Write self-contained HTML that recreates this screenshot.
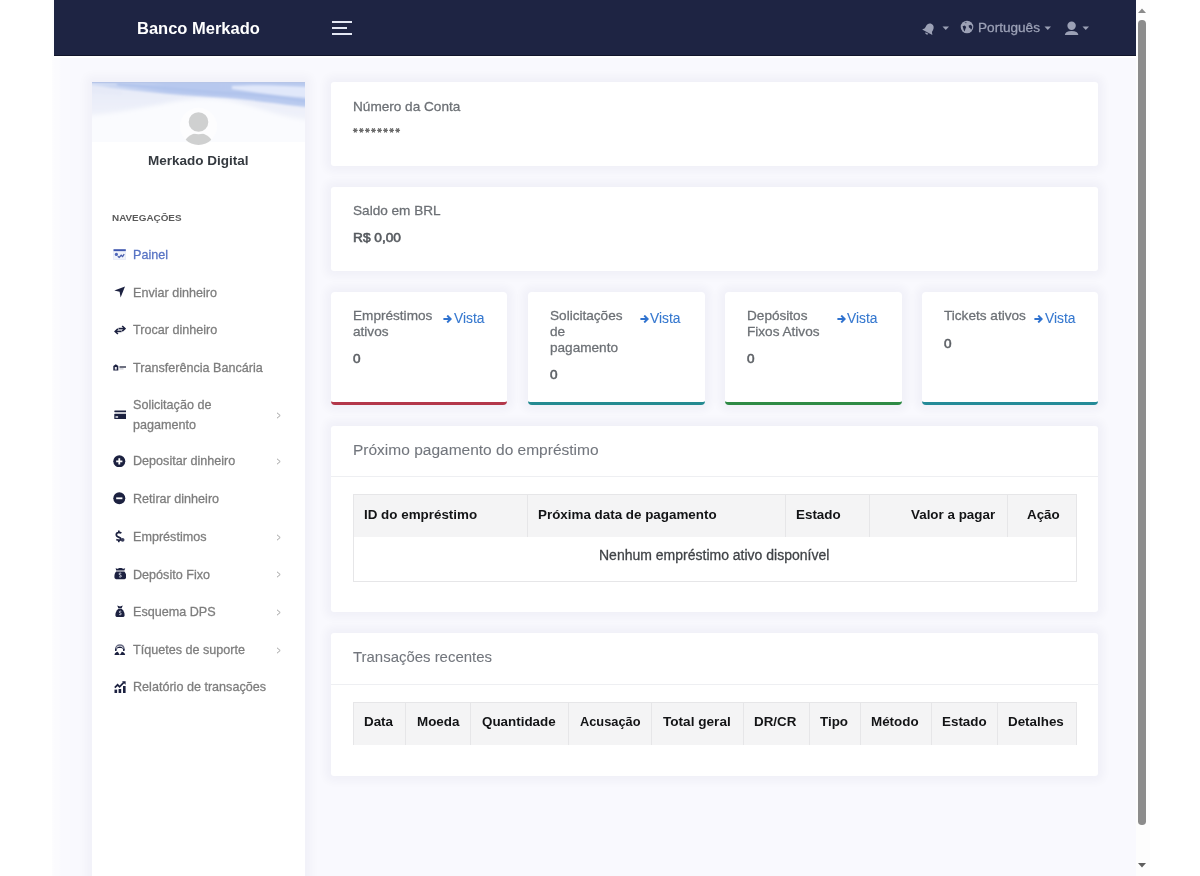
<!DOCTYPE html>
<html><head><meta charset="utf-8"><title>Banco Merkado</title>
<style>
html,body{margin:0;padding:0;background:#fff;width:1200px;height:876px;overflow:hidden;font-family:"Liberation Sans", sans-serif}
.t{position:absolute;white-space:nowrap;line-height:1;will-change:transform}
</style></head><body>
<div style="position:absolute;left:52px;top:0px;width:1086px;height:876px;background:linear-gradient(90deg,#fdfdfe 0,#fbfbfe 3px,#fbfbfe 7px,#f9f9fe 9px)"></div>
<div style="position:absolute;left:54px;top:56px;width:1082px;height:1.5px;background:#ffffff"></div>
<div style="position:absolute;left:54px;top:0px;width:1082px;height:56px;background:#1e2443;border-bottom:1px solid #11152b;box-sizing:border-box"></div>
<div class="t" style="left:137.00px;top:19.63px;font-size:16.5px;font-weight:700;color:#ffffff;">Banco Merkado</div>
<div style="position:absolute;left:332px;top:21.3px;width:20px;height:1.8px;background:#e4e7f3"></div>
<div style="position:absolute;left:332px;top:27.2px;width:15px;height:1.8px;background:#e4e7f3"></div>
<div style="position:absolute;left:332px;top:33.3px;width:20px;height:1.8px;background:#e4e7f3"></div>
<svg style="position:absolute;left:921px;top:22px;" width="16" height="14" viewBox="0 0 16 14"><g transform="rotate(28 8 7)" fill="#9ca1b6"><path d="M8 1.4c2.5 0 4 2 4 4.5v2.4l1.8 2.4H2.2L4 8.3V5.9C4 3.4 5.5 1.4 8 1.4z"/><path d="M6.4 11.4h3.2a1.6 1.6 0 0 1-3.2 0z"/></g></svg>
<svg style="position:absolute;left:942px;top:26px;" width="8" height="5" viewBox="0 0 8 5"><path d="M0.5 0.5h6.5l-3.25 3.6z" fill="#9ca1b6"/></svg>
<svg style="position:absolute;left:960px;top:20px;" width="14" height="14" viewBox="0 0 14 14"><circle cx="7" cy="7" r="6.3" fill="#9ca1b6"/><path d="M2.6 6.2l2.2-.8 1.4 1.6-.9 2.2-.6 2.4-1-1.6z" fill="#1e2443"/><path d="M8.6 5.4l2.2-.6 1.4 1.4-.2 2.2-1 1.4-.8-1.6-1.2-.8z" fill="#1e2443"/><path d="M4.3 1.8l2.6.4-1 1.2z" fill="#1e2443" opacity=".6"/></svg>
<div class="t" style="left:977.50px;top:20.69px;font-size:13.6px;font-weight:400;color:#9ca1b6;-webkit-text-stroke:0.28px #9ca1b6;">Português</div>
<svg style="position:absolute;left:1044px;top:25.5px;" width="8" height="5" viewBox="0 0 8 5"><path d="M0.5 0.5h6.5l-3.25 3.6z" fill="#9ca1b6"/></svg>
<svg style="position:absolute;left:1064px;top:20.5px;" width="16" height="15" viewBox="0 0 16 15"><circle cx="7.6" cy="4.8" r="4.2" fill="#9ca1b6"/><path d="M0.8 14c.4-2.6 2.6-4 6.8-4s6.4 1.4 6.8 4z" fill="#9ca1b6"/></svg>
<svg style="position:absolute;left:1082px;top:26px;" width="8" height="5" viewBox="0 0 8 5"><path d="M0.5 0.5h6.5l-3.25 3.6z" fill="#9ca1b6"/></svg>
<div style="position:absolute;left:1136px;top:0px;width:14px;height:876px;background:#fdfdfd"></div>
<div style="position:absolute;left:1138px;top:20px;width:7.6px;height:805px;background:#8c8c8c;border-radius:3.8px"></div>
<svg style="position:absolute;left:1137px;top:8px;" width="10" height="6" viewBox="0 0 10 6"><path d="M1 5h8l-4-4.5z" fill="#8a8a8a"/></svg>
<svg style="position:absolute;left:1137px;top:862px;" width="10" height="6" viewBox="0 0 10 6"><path d="M1 1h8l-4 4.5z" fill="#5f5f5f"/></svg>
<div style="position:absolute;left:92px;top:82px;width:213px;height:800px;background:#fff;box-shadow:0 0 9px 6px rgba(40,40,90,0.035)"></div>
<svg style="position:absolute;left:92px;top:82px;" width="213" height="60" viewBox="0 0 213 60"><defs>
<filter id="bl" x="-10%" y="-30%" width="120%" height="160%"><feGaussianBlur stdDeviation="1.2"/></filter>
<filter id="bl2" x="-10%" y="-30%" width="120%" height="160%"><feGaussianBlur stdDeviation="2"/></filter>
<linearGradient id="rib" x1="0" y1="0" x2="1" y2="0"><stop offset="0" stop-color="#d6e0f5"/><stop offset=".35" stop-color="#b7c8ee"/><stop offset="1" stop-color="#b9caef"/></linearGradient>
<linearGradient id="lav" x1="0" y1="0" x2="0" y2="1"><stop offset="0" stop-color="#e3e8f7"/><stop offset="1" stop-color="#f1f3fa"/></linearGradient>
</defs>
<rect width="213" height="60" fill="#fafbfe"/>
<g filter="url(#bl2)"><path d="M-10 -5H223V39C190 37 165 24 140 19 120 15 100 16 80 20 50 26 20 32 -10 34z" fill="url(#lav)"/></g>
<g filter="url(#bl)">
<path d="M-5 -5H218V25C190 23 160 17 120 15 80 13 40 8 -5 4z" fill="url(#rib)"/>
<path d="M-5 3C10 4 20 6 30 9V13C20 12 10 11 -5 11z" fill="#e6eaf7"/>
<path d="M140 4C170 2 195 4 218 5V16C190 14 165 11 140 7z" fill="#e1e8fa"/>
<path d="M25 2C70 6 110 10 150 12 180 14 200 17 218 20" fill="none" stroke="#afc2eb" stroke-width="2.5"/>
</g>
<path d="M0 0H213V1.2H0z" fill="#b6c5e8"/>
</svg>
<svg style="position:absolute;left:178px;top:106px;" width="41" height="41" viewBox="0 0 41 41"><defs><clipPath id="avc"><circle cx="20.5" cy="20.4" r="18.6"/></clipPath>
<mask id="avm"><rect width="41" height="41" fill="#fff"/><circle cx="20.5" cy="16" r="12.2" fill="#000"/></mask></defs>
<circle cx="20.5" cy="20.4" r="18.6" fill="#fdfdfe"/>
<circle cx="20.5" cy="16" r="9.8" fill="#cfd0d0"/>
<g clip-path="url(#avc)"><ellipse cx="20.5" cy="40" rx="14.5" ry="13" fill="#cfd0d0" mask="url(#avm)"/></g></svg>
<div class="t" style="left:147.50px;top:153.57px;font-size:13.5px;font-weight:700;color:#353a40;">Merkado Digital</div>
<div class="t" style="left:112.30px;top:213.42px;font-size:9.9px;font-weight:700;color:#5a5a5a;">NAVEGAÇÕES</div>
<div class="t" style="left:132.80px;top:249.33px;font-size:12.6px;font-weight:400;color:#5874c4;-webkit-text-stroke:0.28px #5874c4;">Painel</div>
<div class="t" style="left:132.80px;top:286.73px;font-size:12.6px;font-weight:400;color:#7d7d7d;-webkit-text-stroke:0.28px #7d7d7d;">Enviar dinheiro</div>
<div class="t" style="left:132.80px;top:324.33px;font-size:12.6px;font-weight:400;color:#7d7d7d;-webkit-text-stroke:0.28px #7d7d7d;">Trocar dinheiro</div>
<div class="t" style="left:132.80px;top:361.83px;font-size:12.6px;font-weight:400;color:#7d7d7d;-webkit-text-stroke:0.28px #7d7d7d;">Transferência Bancária</div>
<div class="t" style="left:132.8px;top:396.18px;font-size:12.6px;line-height:19.5px;color:#7d7d7d;-webkit-text-stroke:0.28px #7d7d7d">Solicitação de<br>pagamento</div>
<div class="t" style="left:132.80px;top:455.23px;font-size:12.6px;font-weight:400;color:#7d7d7d;-webkit-text-stroke:0.28px #7d7d7d;">Depositar dinheiro</div>
<div class="t" style="left:132.80px;top:493.33px;font-size:12.6px;font-weight:400;color:#7d7d7d;-webkit-text-stroke:0.28px #7d7d7d;">Retirar dinheiro</div>
<div class="t" style="left:132.80px;top:530.63px;font-size:12.6px;font-weight:400;color:#7d7d7d;-webkit-text-stroke:0.28px #7d7d7d;">Empréstimos</div>
<div class="t" style="left:132.80px;top:568.63px;font-size:12.6px;font-weight:400;color:#7d7d7d;-webkit-text-stroke:0.28px #7d7d7d;">Depósito Fixo</div>
<div class="t" style="left:132.80px;top:606.33px;font-size:12.6px;font-weight:400;color:#7d7d7d;-webkit-text-stroke:0.28px #7d7d7d;">Esquema DPS</div>
<div class="t" style="left:132.80px;top:643.93px;font-size:12.6px;font-weight:400;color:#7d7d7d;-webkit-text-stroke:0.28px #7d7d7d;">Tíquetes de suporte</div>
<div class="t" style="left:132.80px;top:681.33px;font-size:12.6px;font-weight:400;color:#7d7d7d;-webkit-text-stroke:0.28px #7d7d7d;">Relatório de transações</div>
<svg style="position:absolute;left:276px;top:412px;" width="6" height="7" viewBox="0 0 6 7"><path d="M1 0.8L4.2 3.5 1 6.2" fill="none" stroke="#a5a5a5" stroke-width="1"/></svg>
<svg style="position:absolute;left:276px;top:458px;" width="6" height="7" viewBox="0 0 6 7"><path d="M1 0.8L4.2 3.5 1 6.2" fill="none" stroke="#a5a5a5" stroke-width="1"/></svg>
<svg style="position:absolute;left:276px;top:533.5px;" width="6" height="7" viewBox="0 0 6 7"><path d="M1 0.8L4.2 3.5 1 6.2" fill="none" stroke="#a5a5a5" stroke-width="1"/></svg>
<svg style="position:absolute;left:276px;top:571px;" width="6" height="7" viewBox="0 0 6 7"><path d="M1 0.8L4.2 3.5 1 6.2" fill="none" stroke="#a5a5a5" stroke-width="1"/></svg>
<svg style="position:absolute;left:276px;top:608.5px;" width="6" height="7" viewBox="0 0 6 7"><path d="M1 0.8L4.2 3.5 1 6.2" fill="none" stroke="#a5a5a5" stroke-width="1"/></svg>
<svg style="position:absolute;left:276px;top:646.5px;" width="6" height="7" viewBox="0 0 6 7"><path d="M1 0.8L4.2 3.5 1 6.2" fill="none" stroke="#a5a5a5" stroke-width="1"/></svg>
<svg style="position:absolute;left:113px;top:249px;" width="13" height="11" viewBox="0 0 13 11"><rect x=".5" y=".2" width="12.3" height="2.3" fill="#4159b0"/><rect x=".5" y="2.5" width="12.3" height="8" fill="#f0f3fb"/><rect x=".5" y="2.5" width="12.3" height="8" fill="none" stroke="#dfe5f5" stroke-width=".6"/><circle cx="3.4" cy="5.4" r="1.6" fill="#4e66b8"/><path d="M4.8 7.2L6.2 8.4 8.2 6.2 9.6 7.6 11.2 5.2" fill="none" stroke="#4a5fae" stroke-width="1.3"/></svg>
<svg style="position:absolute;left:114px;top:286px;" width="12" height="12" viewBox="0 0 12 12"><path d="M0.3 4.6L11 0.6 6.6 11.4 5.6 5.8z" fill="#1c2140"/></svg>
<svg style="position:absolute;left:113.5px;top:324.5px;" width="12.5" height="10" viewBox="0 0 12.5 10"><path d="M4.5 3.6H10" stroke="#1c2140" stroke-width="1.6"/><path d="M8.2 1L11 3.6 8.2 6.2" fill="none" stroke="#1c2140" stroke-width="1.6"/><path d="M2 6.4H7.6" stroke="#1c2140" stroke-width="1.6"/><path d="M3.9 3.8L1.2 6.4 3.9 9" fill="none" stroke="#1c2140" stroke-width="1.6"/></svg>
<svg style="position:absolute;left:113px;top:364px;" width="14" height="7" viewBox="0 0 14 7"><path d="M0.3 2L2.8 0.2 5.3 2V6.5H0.3z" fill="#1c2140"/><rect x="1.8" y="3" width="2" height="2.6" fill="#e8e8ee"/><rect x="6.5" y="2.2" width="6.5" height="1.6" fill="#4b4f63"/><rect x="6.5" y="4.4" width="4" height="1" fill="#b9bbc6"/></svg>
<svg style="position:absolute;left:113.5px;top:409.5px;" width="12.5" height="9.5" viewBox="0 0 12.5 9.5"><rect x=".3" y=".4" width="12" height="1.8" rx=".6" fill="#1c2140"/><rect x=".3" y="3.8" width="12" height="5.2" rx=".6" fill="#1c2140"/><rect x="1.5" y="6.3" width="2.6" height="1.4" fill="#fff"/></svg>
<svg style="position:absolute;left:113.3px;top:454.8px;" width="12.6" height="12.6" viewBox="0 0 12.6 12.6"><circle cx="6.3" cy="6.3" r="6" fill="#1c2140"/><path d="M6.3 3.2v6.2M3.2 6.3h6.2" stroke="#fff" stroke-width="1.8"/></svg>
<svg style="position:absolute;left:113.3px;top:492.4px;" width="12.6" height="12.6" viewBox="0 0 12.6 12.6"><circle cx="6.3" cy="6.3" r="6" fill="#1c2140"/><path d="M3.2 6.3h6.2" stroke="#fff" stroke-width="1.8"/></svg>
<svg style="position:absolute;left:114.5px;top:530px;" width="10" height="13" viewBox="0 0 10 13"><path d="M3.8 0.5V2.3C2 2.6 1.3 3.6 1.3 4.7c0 1.6 1.4 2.2 2.8 2.7 1.3.5 1.8.9 1.8 1.6 0 .8-.7 1.2-1.9 1.2-.9 0-1.9-.3-2.7-.7" fill="none" stroke="#1c2140" stroke-width="1.7"/><path d="M3.8 10.2V12.2" stroke="#1c2140" stroke-width="1.7"/><path d="M3.8 2.3c1 0 1.9.2 2.6.6" fill="none" stroke="#1c2140" stroke-width="1.7"/><circle cx="7.6" cy="9.8" r="1.9" fill="#3b3f5c"/></svg>
<svg style="position:absolute;left:113.5px;top:567px;" width="12.5" height="12.5" viewBox="0 0 12.5 12.5"><path d="M1.6 1.2c1 .5 2 .6 2.6.2.8-.5 1.6-.5 2.2-.5s1.4 0 2.2.5c.6.4 1.6.3 2.6-.2L10.4 3.6H2.2z" fill="#1c2140"/><path d="M2.2 4.6H10.4C11.8 6 12.3 8 12.2 10.2 12 11.6 11 12.2 9.6 12.2H3C1.6 12.2.6 11.6.4 10.2.3 8 .8 6 2.2 4.6z" fill="#1c2140"/><path d="M7.2 6.4c-.9-.5-2.2-.3-2.2.6 0 1.2 2.4.9 2.4 2.1 0 .9-1.3 1.1-2.3.6" fill="none" stroke="#dfe2ee" stroke-width="1"/></svg>
<svg style="position:absolute;left:114.5px;top:605px;" width="10" height="12.5" viewBox="0 0 10 12.5"><path d="M2.2.6L5 1.6 7.8.6 6.6 3.2H3.4z" fill="#1c2140"/><path d="M3.4 3.8H6.6C8.8 5.6 9.8 8.2 9.6 10.4 9.4 11.6 8.6 12 7.4 12H2.6C1.4 12 .6 11.6.4 10.4.2 8.2 1.2 5.6 3.4 3.8z" fill="#1c2140"/><path d="M6.2 6.4c-.8-.4-2-.2-2 .6 0 1 2.1.8 2.1 1.9 0 .8-1.2 1-2.1.6" fill="none" stroke="#dfe2ee" stroke-width=".9"/></svg>
<svg style="position:absolute;left:114px;top:643.5px;" width="11.5" height="11.5" viewBox="0 0 11.5 11.5"><path d="M1.6 5.4C1.6 2.6 3.4 1 5.8 1s4.2 1.6 4.2 4.4" fill="none" stroke="#6a6e85" stroke-width="1.3"/><path d="M2.4 5.4C2.6 3.6 4 2.6 5.8 2.6S9 3.6 9.2 5.4L8.4 4.4C7 3.8 4.6 3.8 3.2 4.4z" fill="#1c2140"/><rect x="1" y="4.6" width="1.6" height="2.4" rx=".6" fill="#1c2140"/><rect x="9" y="4.6" width="1.6" height="2.4" rx=".6" fill="#1c2140"/><path d="M0.4 11.2C.8 9 2 8 3.8 7.8L5.8 11 7.8 7.8C9.6 8 10.8 9 11.2 11.2z" fill="#1c2140"/></svg>
<svg style="position:absolute;left:113.5px;top:679.5px;" width="12.5" height="13.5" viewBox="0 0 12.5 13.5"><path d="M0.8 7.6L3.6 4.8 5.6 6.8 9.8 2.4" fill="none" stroke="#1c2140" stroke-width="1.7"/><path d="M8 1.2H11.6V4.8z" fill="#1c2140"/><rect x=".5" y="9.6" width="2.6" height="3.6" fill="#1c2140"/><rect x="4.6" y="9" width="2.6" height="4.2" fill="#1c2140"/><rect x="9" y="6" width="2.6" height="7.2" fill="#1c2140"/></svg>
<div style="position:absolute;left:331px;top:82px;width:767px;height:84px;background:#fff;border-radius:3px;box-shadow:0 0 9px 6px rgba(40,40,90,0.035)"></div>
<div class="t" style="left:352.80px;top:99.79px;font-size:13.6px;font-weight:400;color:#6c7075;-webkit-text-stroke:0.28px #6c7075;">Número da Conta</div>
<svg style="position:absolute;left:352px;top:127px;" width="52" height="7" viewBox="0 0 52 7"><g transform="translate(3.30 3.4)" stroke="#6a6a6a" stroke-width="1.25"><path d="M-2.4 0H2.4M-1.2 -2.1L1.2 2.1M1.2 -2.1L-1.2 2.1"/></g><g transform="translate(9.35 3.4)" stroke="#6a6a6a" stroke-width="1.25"><path d="M-2.4 0H2.4M-1.2 -2.1L1.2 2.1M1.2 -2.1L-1.2 2.1"/></g><g transform="translate(15.40 3.4)" stroke="#6a6a6a" stroke-width="1.25"><path d="M-2.4 0H2.4M-1.2 -2.1L1.2 2.1M1.2 -2.1L-1.2 2.1"/></g><g transform="translate(21.45 3.4)" stroke="#6a6a6a" stroke-width="1.25"><path d="M-2.4 0H2.4M-1.2 -2.1L1.2 2.1M1.2 -2.1L-1.2 2.1"/></g><g transform="translate(27.50 3.4)" stroke="#6a6a6a" stroke-width="1.25"><path d="M-2.4 0H2.4M-1.2 -2.1L1.2 2.1M1.2 -2.1L-1.2 2.1"/></g><g transform="translate(33.55 3.4)" stroke="#6a6a6a" stroke-width="1.25"><path d="M-2.4 0H2.4M-1.2 -2.1L1.2 2.1M1.2 -2.1L-1.2 2.1"/></g><g transform="translate(39.60 3.4)" stroke="#6a6a6a" stroke-width="1.25"><path d="M-2.4 0H2.4M-1.2 -2.1L1.2 2.1M1.2 -2.1L-1.2 2.1"/></g><g transform="translate(45.65 3.4)" stroke="#6a6a6a" stroke-width="1.25"><path d="M-2.4 0H2.4M-1.2 -2.1L1.2 2.1M1.2 -2.1L-1.2 2.1"/></g></svg>
<div style="position:absolute;left:331px;top:187px;width:767px;height:84px;background:#fff;border-radius:3px;box-shadow:0 0 9px 6px rgba(40,40,90,0.035)"></div>
<div class="t" style="left:352.80px;top:204.49px;font-size:13.6px;font-weight:400;color:#6c7075;-webkit-text-stroke:0.28px #6c7075;">Saldo em BRL</div>
<div class="t" style="left:352.80px;top:231.10px;font-size:13.7px;font-weight:400;color:#55595e;-webkit-text-stroke:0.6px #55595e;">R$ 0,00</div>
<div style="position:absolute;left:331px;top:292px;width:176px;height:113px;background:#fff;border-radius:4px;border-bottom:3px solid #b3374a;box-sizing:border-box;box-shadow:0 0 9px 6px rgba(40,40,90,0.035)"></div>
<div class="t" style="left:353.00px;top:309.49px;font-size:13.6px;font-weight:400;color:#6c7075;-webkit-text-stroke:0.28px #6c7075;">Empréstimos</div>
<div class="t" style="left:353.00px;top:325.09px;font-size:13.6px;font-weight:400;color:#6c7075;-webkit-text-stroke:0.28px #6c7075;">ativos</div>
<div class="t" style="left:353.00px;top:352.29px;font-size:13.6px;font-weight:400;color:#595d62;-webkit-text-stroke:0.55px #595d62;">0</div>
<svg style="position:absolute;left:443px;top:314.5px;" width="9" height="8" viewBox="0 0 9 8"><path d="M0.4 4H7.6M4.2 0.5L7.7 4 4.2 7.5" fill="none" stroke="#2f72cf" stroke-width="1.9"/></svg>
<div class="t" style="left:453.50px;top:311.82px;font-size:13.8px;font-weight:400;color:#3678cf;-webkit-text-stroke:0.1px #3678cf;">Vista</div>
<div style="position:absolute;left:527.6px;top:292px;width:177px;height:113px;background:#fff;border-radius:4px;border-bottom:3px solid #248a91;box-sizing:border-box;box-shadow:0 0 9px 6px rgba(40,40,90,0.035)"></div>
<div class="t" style="left:549.60px;top:309.49px;font-size:13.6px;font-weight:400;color:#6c7075;-webkit-text-stroke:0.28px #6c7075;">Solicitações</div>
<div class="t" style="left:549.60px;top:325.09px;font-size:13.6px;font-weight:400;color:#6c7075;-webkit-text-stroke:0.28px #6c7075;">de</div>
<div class="t" style="left:549.60px;top:340.69px;font-size:13.6px;font-weight:400;color:#6c7075;-webkit-text-stroke:0.28px #6c7075;">pagamento</div>
<div class="t" style="left:549.60px;top:367.89px;font-size:13.6px;font-weight:400;color:#595d62;-webkit-text-stroke:0.55px #595d62;">0</div>
<svg style="position:absolute;left:639.6px;top:314.5px;" width="9" height="8" viewBox="0 0 9 8"><path d="M0.4 4H7.6M4.2 0.5L7.7 4 4.2 7.5" fill="none" stroke="#2f72cf" stroke-width="1.9"/></svg>
<div class="t" style="left:650.10px;top:311.82px;font-size:13.8px;font-weight:400;color:#3678cf;-webkit-text-stroke:0.1px #3678cf;">Vista</div>
<div style="position:absolute;left:724.6px;top:292px;width:177px;height:113px;background:#fff;border-radius:4px;border-bottom:3px solid #2e8a45;box-sizing:border-box;box-shadow:0 0 9px 6px rgba(40,40,90,0.035)"></div>
<div class="t" style="left:746.60px;top:309.49px;font-size:13.6px;font-weight:400;color:#6c7075;-webkit-text-stroke:0.28px #6c7075;">Depósitos</div>
<div class="t" style="left:746.60px;top:325.09px;font-size:13.6px;font-weight:400;color:#6c7075;-webkit-text-stroke:0.28px #6c7075;">Fixos Ativos</div>
<div class="t" style="left:746.60px;top:352.29px;font-size:13.6px;font-weight:400;color:#595d62;-webkit-text-stroke:0.55px #595d62;">0</div>
<svg style="position:absolute;left:836.6px;top:314.5px;" width="9" height="8" viewBox="0 0 9 8"><path d="M0.4 4H7.6M4.2 0.5L7.7 4 4.2 7.5" fill="none" stroke="#2f72cf" stroke-width="1.9"/></svg>
<div class="t" style="left:847.10px;top:311.82px;font-size:13.8px;font-weight:400;color:#3678cf;-webkit-text-stroke:0.1px #3678cf;">Vista</div>
<div style="position:absolute;left:922px;top:292px;width:176px;height:113px;background:#fff;border-radius:4px;border-bottom:3px solid #248a98;box-sizing:border-box;box-shadow:0 0 9px 6px rgba(40,40,90,0.035)"></div>
<div class="t" style="left:944.00px;top:309.49px;font-size:13.6px;font-weight:400;color:#6c7075;-webkit-text-stroke:0.28px #6c7075;">Tickets ativos</div>
<div class="t" style="left:944.00px;top:336.69px;font-size:13.6px;font-weight:400;color:#595d62;-webkit-text-stroke:0.55px #595d62;">0</div>
<svg style="position:absolute;left:1034px;top:314.5px;" width="9" height="8" viewBox="0 0 9 8"><path d="M0.4 4H7.6M4.2 0.5L7.7 4 4.2 7.5" fill="none" stroke="#2f72cf" stroke-width="1.9"/></svg>
<div class="t" style="left:1044.50px;top:311.82px;font-size:13.8px;font-weight:400;color:#3678cf;-webkit-text-stroke:0.1px #3678cf;">Vista</div>
<div style="position:absolute;left:331px;top:425.5px;width:767px;height:186.5px;background:#fff;border-radius:3px;box-shadow:0 0 9px 6px rgba(40,40,90,0.035)"></div>
<div class="t" style="left:352.80px;top:441.98px;font-size:15.5px;font-weight:400;color:#72767d;-webkit-text-stroke:0.08px #72767d;">Próximo pagamento do empréstimo</div>
<div style="position:absolute;left:331px;top:476px;width:767px;height:1px;background:#eeeff2"></div>
<div style="position:absolute;left:352.5px;top:493.5px;width:724.5px;height:88px;border:1px solid #e6e6e8;box-sizing:border-box;background:#fff"></div>
<div style="position:absolute;left:353.5px;top:494.5px;width:722.5px;height:42.5px;background:#f4f4f5"></div>
<div style="position:absolute;left:527px;top:494.5px;width:1px;height:42.5px;background:#e6e6e8"></div>
<div style="position:absolute;left:785px;top:494.5px;width:1px;height:42.5px;background:#e6e6e8"></div>
<div style="position:absolute;left:869px;top:494.5px;width:1px;height:42.5px;background:#e6e6e8"></div>
<div style="position:absolute;left:1007px;top:494.5px;width:1px;height:42.5px;background:#e6e6e8"></div>
<div class="t" style="left:364.00px;top:508.26px;font-size:13.4px;font-weight:700;color:#131416;">ID do empréstimo</div>
<div class="t" style="left:537.50px;top:508.26px;font-size:13.4px;font-weight:700;color:#131416;">Próxima data de pagamento</div>
<div class="t" style="left:795.50px;top:508.26px;font-size:13.4px;font-weight:700;color:#131416;">Estado</div>
<div class="t" style="left:910.50px;top:508.26px;font-size:13.4px;font-weight:700;color:#131416;">Valor a pagar</div>
<div class="t" style="left:1026.50px;top:508.26px;font-size:13.4px;font-weight:700;color:#131416;">Ação</div>
<div class="t" style="left:599.00px;top:547.85px;font-size:14px;font-weight:400;color:#3f4246;-webkit-text-stroke:0.28px #3f4246;">Nenhum empréstimo ativo disponível</div>
<div style="position:absolute;left:331px;top:633.3px;width:767px;height:143px;background:#fff;border-radius:3px;box-shadow:0 0 9px 6px rgba(40,40,90,0.035)"></div>
<div class="t" style="left:352.80px;top:649.64px;font-size:14.95px;font-weight:400;color:#72767d;-webkit-text-stroke:0.08px #72767d;">Transações recentes</div>
<div style="position:absolute;left:331px;top:683.5px;width:767px;height:1px;background:#eeeff2"></div>
<div style="position:absolute;left:352.5px;top:701.5px;width:724.5px;height:43px;background:#f4f4f5;border:1px solid #e6e6e8;border-bottom:none;box-sizing:border-box"></div>
<div style="position:absolute;left:405px;top:702px;width:1px;height:42.5px;background:#e6e6e8"></div>
<div style="position:absolute;left:470px;top:702px;width:1px;height:42.5px;background:#e6e6e8"></div>
<div style="position:absolute;left:568px;top:702px;width:1px;height:42.5px;background:#e6e6e8"></div>
<div style="position:absolute;left:651px;top:702px;width:1px;height:42.5px;background:#e6e6e8"></div>
<div style="position:absolute;left:743px;top:702px;width:1px;height:42.5px;background:#e6e6e8"></div>
<div style="position:absolute;left:808.5px;top:702px;width:1px;height:42.5px;background:#e6e6e8"></div>
<div style="position:absolute;left:859.5px;top:702px;width:1px;height:42.5px;background:#e6e6e8"></div>
<div style="position:absolute;left:930.5px;top:702px;width:1px;height:42.5px;background:#e6e6e8"></div>
<div style="position:absolute;left:996.5px;top:702px;width:1px;height:42.5px;background:#e6e6e8"></div>
<div class="t" style="left:364.40px;top:715.46px;font-size:13.4px;font-weight:700;color:#131416;">Data</div>
<div class="t" style="left:416.50px;top:715.46px;font-size:13.4px;font-weight:700;color:#131416;">Moeda</div>
<div class="t" style="left:482.00px;top:715.46px;font-size:13.4px;font-weight:700;color:#131416;">Quantidade</div>
<div class="t" style="left:579.70px;top:715.96px;font-size:12.8px;font-weight:700;color:#131416;">Acusação</div>
<div class="t" style="left:663.00px;top:715.29px;font-size:13.6px;font-weight:700;color:#131416;">Total geral</div>
<div class="t" style="left:754.00px;top:715.46px;font-size:13.4px;font-weight:700;color:#131416;">DR/CR</div>
<div class="t" style="left:819.80px;top:715.46px;font-size:13.4px;font-weight:700;color:#131416;">Tipo</div>
<div class="t" style="left:871.00px;top:715.46px;font-size:13.4px;font-weight:700;color:#131416;">Método</div>
<div class="t" style="left:941.50px;top:715.46px;font-size:13.4px;font-weight:700;color:#131416;">Estado</div>
<div class="t" style="left:1008.40px;top:715.46px;font-size:13.4px;font-weight:700;color:#131416;">Detalhes</div>
</body></html>
